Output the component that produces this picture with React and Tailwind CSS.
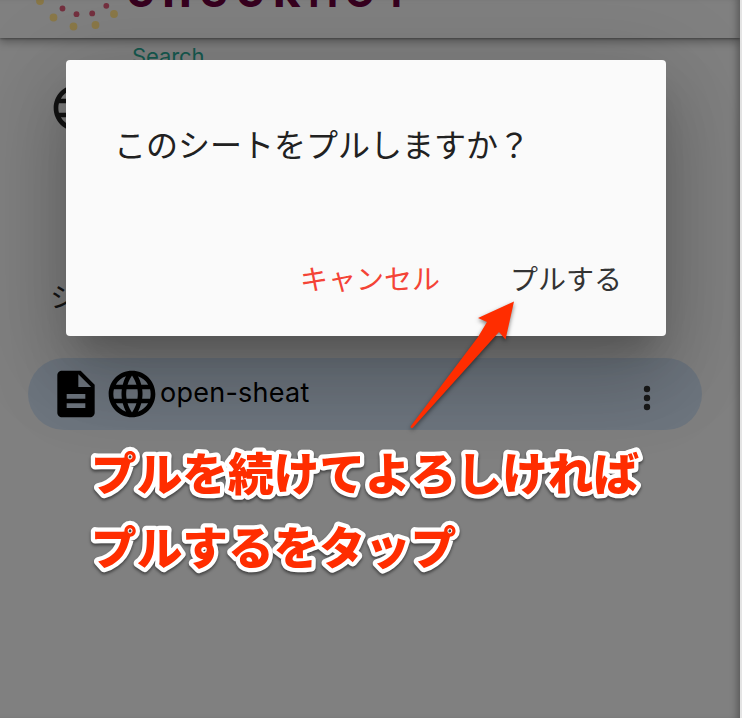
const jp = "font-['Liberation_Sans','Noto_Sans_CJK_JP',sans-serif]";

function Globe({ className }) {
  return (
    <svg viewBox="0 0 24 24" fill="currentColor" className={className}>
      <path d="M11.99 2C6.47 2 2 6.48 2 12s4.47 10 9.99 10C17.52 22 22 17.52 22 12S17.52 2 11.99 2zm6.93 6h-2.95c-.32-1.25-.78-2.45-1.38-3.56 1.84.63 3.37 1.91 4.33 3.56zM12 4.04c.83 1.2 1.48 2.53 1.91 3.96h-3.82c.43-1.43 1.08-2.76 1.91-3.96zM4.26 14C4.1 13.36 4 12.69 4 12s.1-1.36.26-2h3.38c-.08.66-.14 1.32-.14 2s.06 1.34.14 2H4.26zm.82 2h2.95c.32 1.25.78 2.45 1.38 3.56-1.84-.63-3.37-1.9-4.33-3.56zm2.95-8H5.08c.96-1.66 2.49-2.93 4.33-3.56C8.81 5.55 8.35 6.75 8.03 8zM12 19.96c-.83-1.2-1.48-2.53-1.91-3.96h3.82c-.43 1.43-1.08 2.76-1.91 3.96zM14.34 14H9.66c-.09-.66-.16-1.32-.16-2s.07-1.35.16-2h4.68c.09.65.16 1.32.16 2s-.07 1.34-.16 2zm.25 5.56c.6-1.11 1.06-2.31 1.38-3.56h2.95c-.96 1.65-2.49 2.93-4.33 3.56zM16.36 14c.08-.66.14-1.32.14-2s-.06-1.34-.14-2h3.38c.16.64.26 1.31.26 2s-.1 1.36-.26 2h-3.38z" />
    </svg>
  );
}

function Document({ className }) {
  return (
    <svg viewBox="0 0 24 24" fill="currentColor" className={className}>
      <path d="M14 2H6c-1.1 0-2 .9-2 2v16c0 1.1.9 2 2 2h12c1.1 0 2-.9 2-2V8l-6-6zm2 16H8v-2h8v2zm0-4H8v-2h8v2zm-3-5V3.500L18.500 9H13z" />
    </svg>
  );
}

function Logo() {
  return (
    <div className="flex h-[38px] items-start overflow-hidden">
      <svg viewBox="0 0 122 38" className="h-[38px] w-[122px] shrink-0">
        <g fill="#8a7848">
          <circle cx="40" cy="1" r="3.900" />
          <circle cx="53.500" cy="17.500" r="3.900" />
          <circle cx="73.500" cy="26.500" r="3.900" />
          <circle cx="95.500" cy="25" r="3.900" />
          <circle cx="114" cy="14" r="3.900" />
        </g>
        <g fill="#74303f">
          <circle cx="62.500" cy="8.500" r="2.900" />
          <circle cx="76.500" cy="14.200" r="2.900" />
          <circle cx="92.200" cy="13.400" r="2.900" />
          <circle cx="106.300" cy="5.800" r="2.900" />
        </g>
      </svg>
      <div className="-mt-[40px] grid grid-cols-[repeat(8,36.600px)] items-baseline justify-items-center font-['Inter',sans-serif] text-[48px] leading-[60px] font-bold text-[#37001f]">
        {[..."check"].map((c, i) => (
          <span key={i}>{c}</span>
        ))}
        {[..."HOT"].map((c, i) => (
          <span key={i} className="text-[40px]">{c}</span>
        ))}
      </div>
    </div>
  );
}

export default function App() {
  return (
    <div className="relative h-[718px] w-[742px] overflow-hidden bg-[#e4e4e4]">
      <div className="h-full w-[740px] overflow-hidden bg-[#808080]">
        <header className="relative h-[38px] bg-[#808080] shadow-[0_4px_8px_rgba(0,0,0,0.3),0_1px_2px_rgba(0,0,0,0.3)]">
          <Logo />
        </header>
        <div className="h-[46px] pt-[3px] pl-[132px] font-['Inter',sans-serif] text-[22px] leading-[30px] tracking-[-0.100px] text-[#16594f]">Search</div>
        <div className="pl-[49px] text-[#131313]">
          <Globe className="-mt-[4px] -mb-[4px] h-[56px] w-[56px]" />
        </div>
        <div className={`${jp} h-[226px] pt-[150px] pl-[50px] text-[28px] leading-[34px] text-[#161616]`}>シート</div>
        <div className="mr-[38px] ml-[28px] flex h-[72px] items-center rounded-full bg-[#6e767f] pr-[27px] pl-[20px] text-black">
          <Document className="h-[56px] w-[56px]" />
          <Globe className="h-[56px] w-[56px]" />
          <span className="-mt-[2px] font-['Inter',sans-serif] text-[27px] leading-[36px] tracking-[0.250px]">open-sheat</span>
          <svg viewBox="0 0 56 56" fill="#191919" className="mt-[8px] ml-auto h-[56px] w-[56px]">
            <circle cx="28" cy="19" r="3.200" />
            <circle cx="28" cy="28" r="3.200" />
            <circle cx="28" cy="37" r="3.200" />
          </svg>
        </div>
      </div>
      <div className="absolute inset-y-0 left-0 w-[740px] shadow-[inset_-7px_0_7px_-4px_rgba(0,0,0,0.3)]" />

      <section
        role="dialog"
        className={`${jp} absolute top-[60px] left-[66px] flex h-[276px] w-[600px] flex-col justify-between rounded-[4px] bg-[#fafafa] pt-[62px] pr-[44px] pb-[33px] pl-[48px] shadow-[0_22px_30px_-14px_rgba(0,0,0,0.2),0_48px_76px_6px_rgba(0,0,0,0.14),0_18px_92px_16px_rgba(0,0,0,0.12)]`}
      >
        <h2 className="text-[32px] leading-[48px] text-[#212121]">このシートをプルしますか？</h2>
        <div className="flex justify-end gap-[70px] text-[28px] leading-[44px]">
          <button className="text-[#f44336]">キャンセル</button>
          <button className="text-[#333333]">プルする</button>
        </div>
      </section>

      <svg viewBox="0 0 742 718" className="pointer-events-none absolute inset-0 h-full w-full">
        <g className="drop-shadow-[0_2px_2px_rgba(0,0,0,0.5)]">
          <path d="M514 301.500L505.500 339.500L499 332L413 427.500Q411 429 410.500 426.500L478 337L487 322L478 318Z" fill="#ff2d00" />
        </g>
        <g
          fill="#ff2d00"
          stroke="#ffffff"
          strokeWidth="8.500"
          strokeLinejoin="round"
          paintOrder="stroke"
          className="font-['Noto_Sans_CJK_JP',sans-serif] text-[45.700px] font-black drop-shadow-[0_2px_1.500px_rgba(0,0,0,0.5)]"
        >
          <text x="91" y="491">プルを続けてよろしければ</text>
          <text x="91" y="565">プルするをタップ</text>
        </g>
      </svg>
    </div>
  );
}
